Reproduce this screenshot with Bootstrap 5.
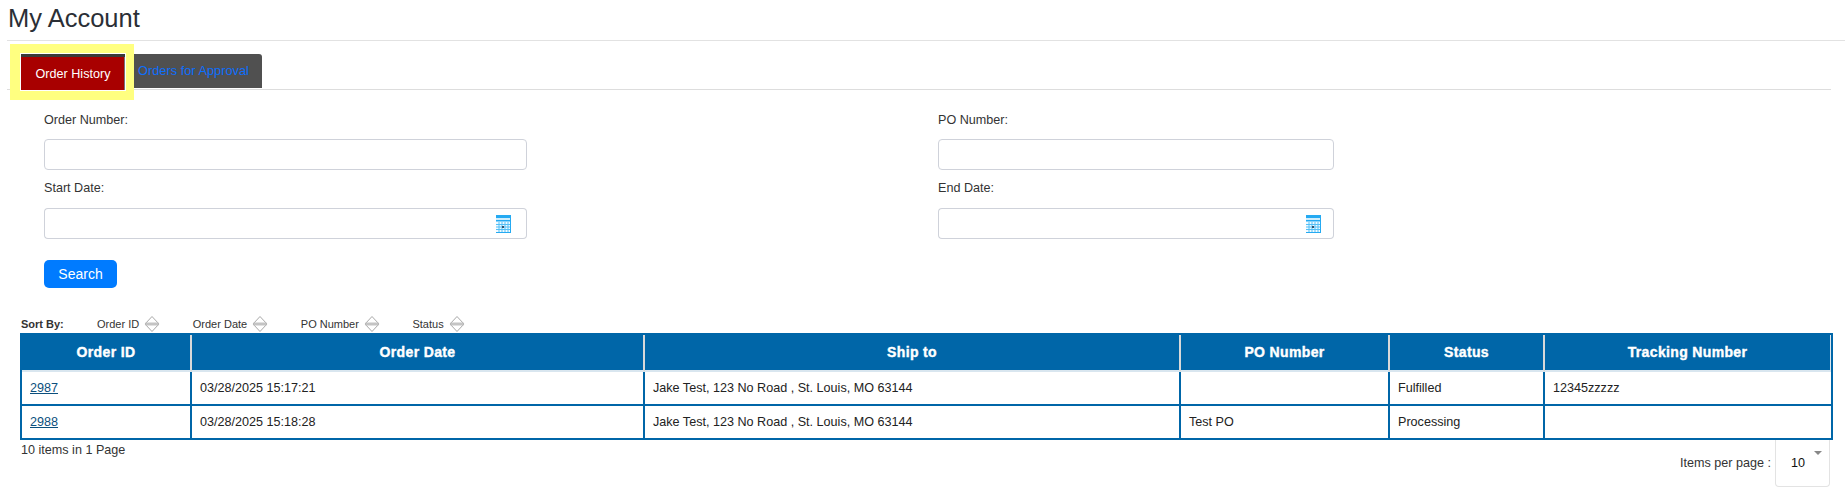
<!DOCTYPE html>
<html lang="en">
<head>
  <meta charset="UTF-8" />
  <title>My Account</title>
  <link href="https://cdn.jsdelivr.net/npm/bootstrap@5.3.0/dist/css/bootstrap.min.css" rel="stylesheet" />
  <style>
    body {
      font-family: "Liberation Sans", Arial, sans-serif;
      font-size: 12.6px;
      color: #333;
      background: #fff;
    }
    .page-wrap { padding: 0 0 0 7px; }
    .page-title {
      font-size: 25.5px;
      line-height: 36px;
      margin: 0;
      padding: 0 0 4px 1px;
      border-bottom: 1px solid #e2e2e2;
      color: #2b2f36;
    }
    .tab-bar {
      margin: 3px 14px 0 0;
      border-bottom: 1px solid #ddd;
      height: 46px;
    }
    .tab-glow {
      background: #ffff80;
      margin-left: 3px;
      padding: 9px 8px 9px 10px;
      height: 56px;
      position: relative;
    }
    .tab-active {
      display: block;
      width: 106px;
      height: 38px;
      border: 1px solid #fff;
      background: #a80000;
      box-shadow: inset 0 3px 0 #3a3a3a, inset -1px 0 0 #777;
      color: #fff;
      text-align: center;
      line-height: 40px;
      text-decoration: none;
    }
    .tab-other {
      display: block;
      height: 34px;
      margin-top: 10px;
      width: 128px;
      padding-left: 4px;
      background: #505050;
      border-top-right-radius: 3px;
      color: #0d6efd;
      font-size: 12.8px;
      line-height: 34px;
      text-decoration: none;
    }
    .search-form { padding: 21px 0 0 37px; }
    .field-left { width: 483px; margin-right: 411px; }
    .field-right { width: 396px; }
    .field-label { display: block; height: 18px; line-height: 18px; margin: 0 0 10px; }
    .field-input {
      height: 31px;
      font-size: 12.6px;
      border: 1px solid #cfd2da;
      border-radius: 4px;
      margin-bottom: 11px;
    }
    .field-row-2 .field-label { margin-bottom: 11px; }
    .date-group { height: 31px; margin-bottom: 0; }
    .date-group .field-input { margin-bottom: 0; border-right: 0; }
    .date-group .input-group-text {
      background: #fff;
      border: 1px solid #cfd2da;
      border-left: 0;
      border-radius: 0 4px 4px 0;
      padding: 0 15px 0 0;
    }
    .field-right .date-group .input-group-text { padding-right: 12px; }
    .field-row-2 { margin-top: -2px; }
    .btn-search {
      display: block;
      margin-top: 21px;
      width: 73px;
      height: 28px;
      padding: 0;
      background: #007bff;
      border: 0;
      border-radius: 5px;
      font-size: 14px;
      color: #fff;
    }
    .sort-row {
      margin: 27px 0 0 14px;
      height: 18px;
      font-size: 11px;
      color: #333;
    }
    .sort-title { width: 76px; font-weight: bold; }
    .sort-item { margin-right: 32.6px; gap: 5px; }
    .orders-table {
      table-layout: fixed;
      width: 1813px;
      margin: 0 0 0 13px;
      border: 2px solid #0066a8;
      border-collapse: separate;
      border-spacing: 0;
      font-size: 12.6px;
    }
    .orders-table th {
      background: #0066a8;
      color: #fff;
      height: 37px;
      padding: 0;
      text-align: center;
      vertical-align: middle;
      font-size: 14px;
      font-weight: bold;
      letter-spacing: .35px;
      -webkit-text-stroke: .4px #fff;
      border: 0;
      border-right: 2px solid #d9d9d9;
      border-bottom: 2px solid #d9e6ef;
    }
    .orders-table th:last-child { border-right: 1px solid #d9e6ef; }
    .orders-table td {
      height: 34px;
      padding: 0 8px;
      vertical-align: middle;
      color: #222;
      border: 0;
      border-right: 2px solid #0066a8;
      border-bottom: 2px solid #0066a8;
    }
    .orders-table td:last-child { border-right: 0; }
    .orders-table tr:last-child td { border-bottom: 0; height: 32px; }
    .orders-table td a { color: #0b4f7d; }
    .col-order { width: 170px; }
    .col-date { width: 453px; }
    .col-ship { width: 536px; }
    .col-po { width: 209px; }
    .col-status { width: 155px; }
    .table-foot { margin: 0 15px 0 14px; }
    .foot-count { padding-top: 1px; line-height: 18px; }
    .foot-pager { gap: 4px; }
    .per-page-box {
      width: 55px;
      height: 47px;
      border: 1px solid #e3e3e3;
      border-top: 0;
      border-radius: 0 0 4px 4px;
      padding: 0 0 0 15px;
      line-height: 47px;
      color: #111;
      position: relative;
    }
    .per-page-caret {
      position: absolute;
      top: 11px;
      right: 7px;
      width: 0;
      height: 0;
      border-left: 4px solid transparent;
      border-right: 4px solid transparent;
      border-top: 4px solid #888;
    }
  </style>
</head>
<body>
  <div class="page-wrap">
    <h1 class="page-title">My Account</h1>

    <!-- Tabs -->
    <div class="tab-bar d-flex">
      <div class="tab-glow"><a class="tab-active" href="#">Order History</a></div>
      <a class="tab-other" href="#">Orders for Approval</a>
    </div>

    <!-- Search form -->
    <form class="search-form">
      <div class="d-flex">
        <div class="field-left">
          <label class="field-label">Order Number:</label>
          <input type="text" class="form-control field-input" />
        </div>
        <div class="field-right">
          <label class="field-label">PO Number:</label>
          <input type="text" class="form-control field-input" />
        </div>
      </div>
      <div class="d-flex field-row-2">
        <div class="field-left">
          <label class="field-label">Start Date:</label>
          <div class="input-group date-group">
            <input type="text" class="form-control field-input" />
            <span class="input-group-text">
              <svg width="16" height="18" viewBox="0 0 16 18"><use href="#cal-icon"></use></svg>
            </span>
          </div>
        </div>
        <div class="field-right">
          <label class="field-label">End Date:</label>
          <div class="input-group date-group">
            <input type="text" class="form-control field-input" />
            <span class="input-group-text">
              <svg width="16" height="18" viewBox="0 0 16 18"><use href="#cal-icon"></use></svg>
            </span>
          </div>
        </div>
      </div>
      <button type="button" class="btn btn-primary btn-search">Search</button>
    </form>

    <!-- Sort bar -->
    <div class="sort-row d-flex align-items-center">
      <span class="sort-title">Sort By:</span>
      <span class="sort-item d-flex align-items-center">Order ID <svg width="16" height="18" viewBox="0 0 16 18"><use href="#sort-icon"></use></svg></span>
      <span class="sort-item d-flex align-items-center">Order Date <svg width="16" height="18" viewBox="0 0 16 18"><use href="#sort-icon"></use></svg></span>
      <span class="sort-item d-flex align-items-center">PO Number <svg width="16" height="18" viewBox="0 0 16 18"><use href="#sort-icon"></use></svg></span>
      <span class="sort-item d-flex align-items-center">Status <svg width="16" height="18" viewBox="0 0 16 18"><use href="#sort-icon"></use></svg></span>
    </div>

    <!-- Orders -->
    <table class="orders-table">
      <colgroup>
        <col class="col-order" /><col class="col-date" /><col class="col-ship" />
        <col class="col-po" /><col class="col-status" /><col />
      </colgroup>
      <thead>
        <tr>
          <th>Order ID</th><th>Order Date</th><th>Ship to</th><th>PO Number</th><th>Status</th><th>Tracking Number</th>
        </tr>
      </thead>
      <tbody>
        <tr>
          <td><a href="#">2987</a></td><td>03/28/2025 15:17:21</td><td>Jake Test, 123 No Road , St. Louis, MO 63144</td><td></td><td>Fulfilled</td><td>12345zzzzz</td>
        </tr>
        <tr>
          <td><a href="#">2988</a></td><td>03/28/2025 15:18:28</td><td>Jake Test, 123 No Road , St. Louis, MO 63144</td><td>Test PO</td><td>Processing</td><td></td>
        </tr>
      </tbody>
    </table>

    <div class="table-foot d-flex justify-content-between">
      <div class="foot-count">10 items in 1 Page</div>
      <div class="foot-pager d-flex align-items-center">
        <span>Items per page :</span>
        <div class="per-page-box">10<span class="per-page-caret"></span></div>
      </div>
    </div>
  </div>

  <svg width="0" height="0" class="d-block">
    <defs>
      <g id="cal-icon">
        <rect x="0" y="0" width="16" height="18" fill="#25aaf2" />
        <rect x="1" y="3" width="14" height="2" fill="#cfeefd" />
        <rect x="1" y="6.5" width="14" height="10.5" fill="#f0faff" />
        <path d="M1 9.5h14M1 12h14M1 14.5h14M4 7v10M7 7v10M10 7v10M13 7v10" stroke="#55c0f7" stroke-width="1" fill="none" />
        <rect x="7" y="11" width="2" height="2" fill="#34506a" />
      </g>
      <g id="sort-icon">
        <path d="M1 9L8 1.5 15 9 8 16.5z" fill="#fff" stroke="#a8a8a8" stroke-width="1" />
        <rect x="1.5" y="7.5" width="13" height="3" fill="#c4c4c4" />
      </g>
    </defs>
  </svg>

  <script src="https://cdn.jsdelivr.net/npm/bootstrap@5.3.0/dist/js/bootstrap.bundle.min.js"></script>
</body>
</html>
